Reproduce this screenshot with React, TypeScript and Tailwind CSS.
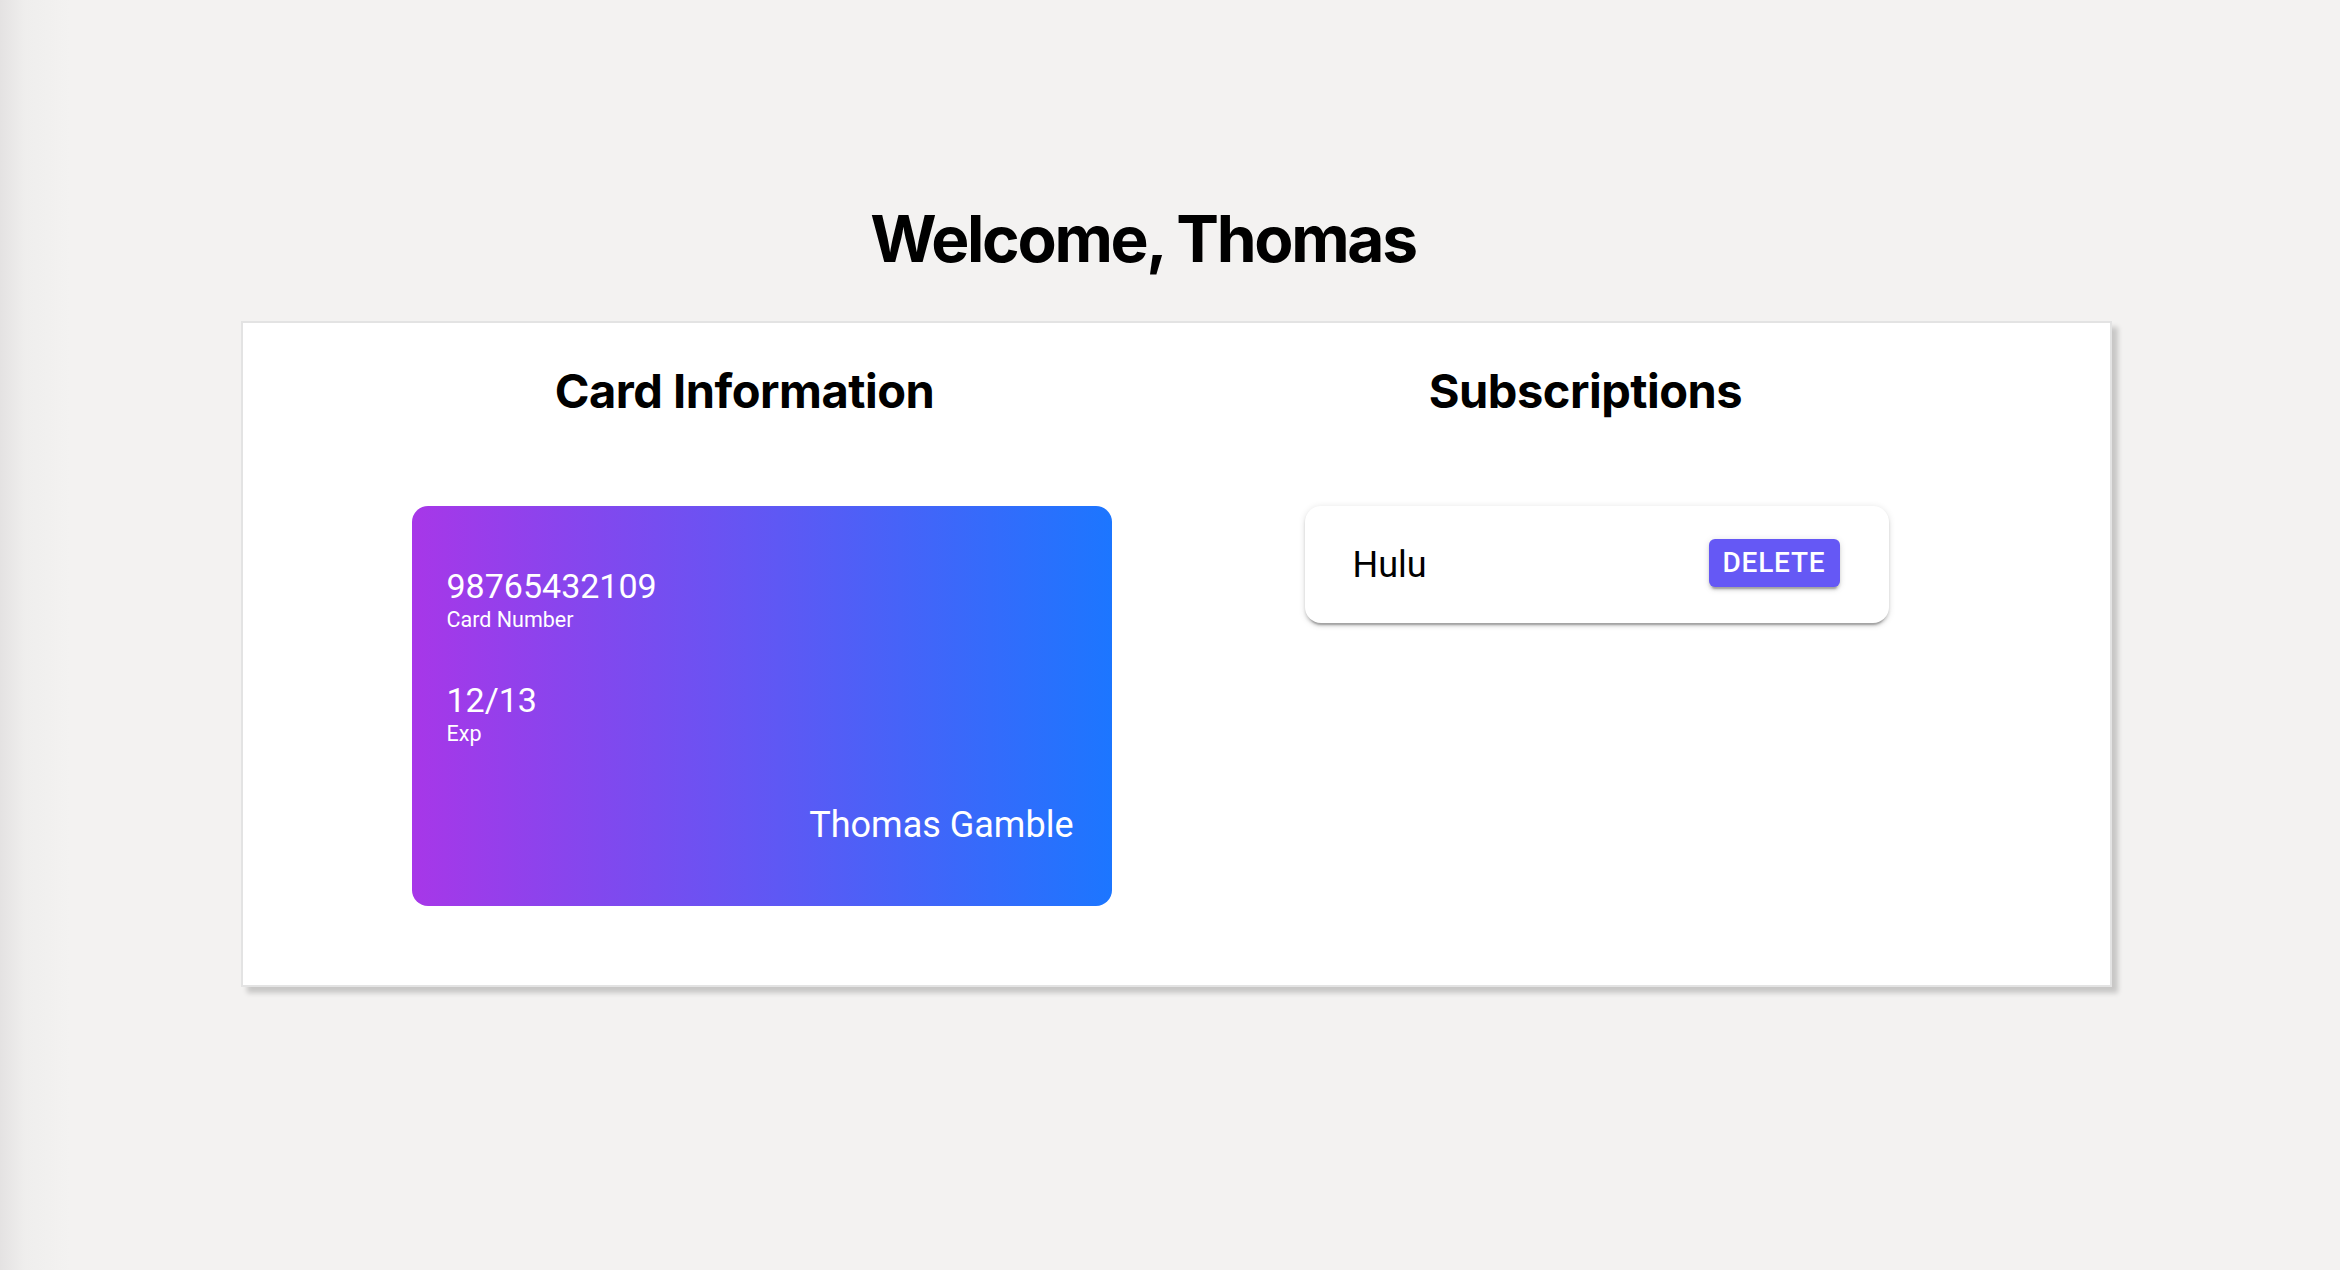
import React from "react";

const muiShadow =
  "shadow-[0px_4.5px_1.5px_-3px_rgba(0,0,0,0.2),0px_3px_3px_0px_rgba(0,0,0,0.14),0px_1.5px_7.5px_0px_rgba(0,0,0,0.12)]";

export default function App() {
  return (
    <div
      className="min-h-screen w-full bg-[#f3f2f1] bg-[linear-gradient(to_right,#e4e2e2_0px,#efeeed_25px,#f3f2f1_70px)] pt-[207px] pb-[200px]"
      style={{ fontFamily: "Inter, 'Noto Sans', sans-serif" }}
    >
      <h1 className="pr-[54px] text-center text-[64px] font-bold leading-none tracking-[-2.3px] text-black">
        Welcome, Thomas
      </h1>

      <div className="mt-[50px] ml-[241px] mr-[228px] border-2 border-[#e3e3e3] bg-white pt-[44px] pb-[79px] pl-[101px] pr-[96px] shadow-[6px_6px_5px_rgba(0,0,0,0.18)]">
        <div className="grid grid-cols-2">
          {/* Card Information */}
          <div className="flex flex-col items-center">
            <h2 className="pr-[34px] text-[47px] font-bold leading-none tracking-[-0.5px] text-black">
              Card Information
            </h2>
            <div
              className="mt-[92px] flex h-[400px] w-[700px] flex-col rounded-[16px] bg-[linear-gradient(to_right,#a737e8,#1c76ff)] pt-[61px] pl-[35px] pr-[38px] text-white"
              style={{ fontFamily: "Roboto, 'Noto Sans', sans-serif" }}
            >
              <div className="text-[34px] leading-[38.6px]">98765432109</div>
              <div className="mt-[2px] text-[21.5px] leading-[24.6px]">Card Number</div>
              <div className="mt-[49px] text-[34px] leading-[38.6px]">12/13</div>
              <div className="mt-[2px] text-[21.5px] leading-[24.6px]">Exp</div>
              <div className="mt-[58px] text-right text-[36px] leading-[42px]">Thomas Gamble</div>
            </div>
          </div>

          {/* Subscriptions */}
          <div className="flex flex-col items-center">
            <h2 className="pr-[22px] text-[47px] font-bold leading-none tracking-[-0.5px] text-black">
              Subscriptions
            </h2>
            <div
              className={`mt-[92px] flex h-[117px] w-[584px] items-center justify-between rounded-[16px] bg-white pl-[48px] pr-[49px] ${muiShadow}`}
              style={{ fontFamily: "Roboto, 'Noto Sans', sans-serif" }}
            >
              <span className="text-[36px] leading-none text-black">Hulu</span>
              <button className="-mt-[3px] flex h-[48px] items-center rounded-[6px] bg-[#6558f5] px-[14px] text-[28px] font-medium uppercase tracking-[0.8px] text-white shadow-[0px_4.5px_1.5px_-3px_rgba(0,0,0,0.2),0px_3px_3px_0px_rgba(0,0,0,0.14),0px_1.5px_7.5px_0px_rgba(0,0,0,0.12)]">
                Delete
              </button>
            </div>
          </div>
        </div>
      </div>
    </div>
  );
}
